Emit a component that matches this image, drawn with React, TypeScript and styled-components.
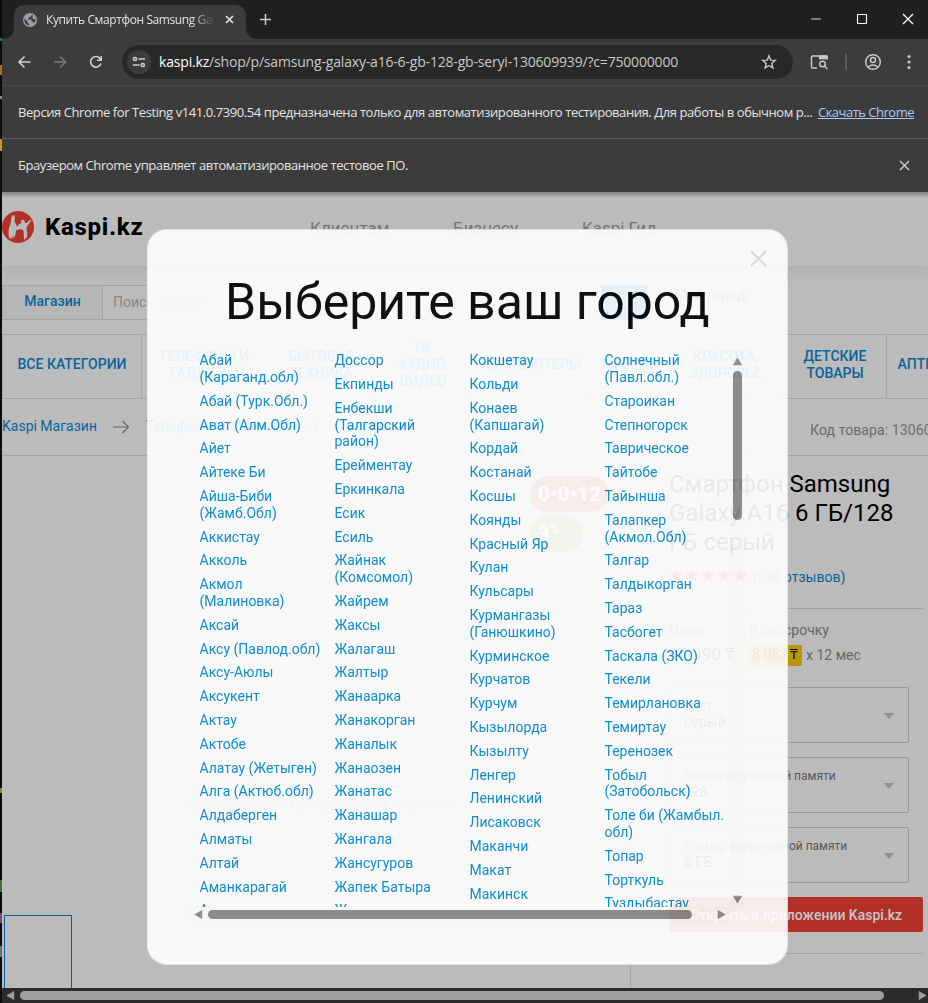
import React from 'react';
import styled, { createGlobalStyle, css } from 'styled-components';

const Global = createGlobalStyle`
  * { box-sizing: border-box; }
  html, body { margin: 0; padding: 0; background: #111; overflow: hidden; }
  svg { display: block; flex: none; }
`;

const Desktop = styled.div`
  width: 928px;
  height: 1003px;
  display: flex;
  overflow: hidden;
  background: #0c0c0c;
`;

const DesktopEdge = styled.div`
  width: 2px;
  flex: none;
  background: linear-gradient(
    #0c0c0c 0 38px, #1f6f73 38px 41px, #0c0c0c 41px 65px, #9c7417 65px 75px, #0c0c0c 75px 96px, #8a8a8a 96px 99px,
    #0c0c0c 99px 139px, #c29a13 139px 151px, #0c0c0c 151px 788px, #6f8f4e 788px 793px, #0c0c0c 793px 880px,
    #3f6f43 880px 892px, #0c0c0c 892px 913px, #7a4f70 913px 923px, #0c0c0c 923px 946px, #6b7078 946px 957px, #0c0c0c 957px
  );
`;

const Window = styled.div`
  flex: 1;
  min-width: 0;
  display: flex;
  flex-direction: column;
  overflow: hidden;
`;

const uiFont = css`
  font-family: 'Open Sans', 'Noto Sans', sans-serif;
`;

const TabStrip = styled.div`
  height: 39px;
  flex: none;
  display: flex;
  background: #1f2120;
  padding-left: 12px;
`;

const Tab = styled.div`
  ${uiFont}
  position: relative;
  width: 232px;
  height: 34px;
  margin-top: 5px;
  padding: 0 10px 5px 9px;
  border-radius: 10px 10px 0 0;
  background: #3c3c3c;
  display: flex;
  align-items: center;
  color: #e3e3e3;
  font-size: 12px;
  &::before,
  &::after {
    content: '';
    position: absolute;
    bottom: 0;
    width: 10px;
    height: 10px;
  }
  &::before {
    left: -10px;
    background: radial-gradient(circle at 0 0, transparent 9.5px, #3c3c3c 10px);
  }
  &::after {
    right: -10px;
    background: radial-gradient(circle at 100% 0, transparent 9.5px, #3c3c3c 10px);
  }
`;

const TabTitle = styled.div`
  width: 168px;
  margin-left: 9px;
  letter-spacing: -0.4px;
  white-space: nowrap;
  overflow: hidden;
  mask-image: linear-gradient(90deg, #000 145px, transparent 169px);
`;

const TabClose = styled.div`
  margin-left: 11px;
`;

const NewTab = styled.div`
  margin: 14px 0 0 14px;
`;

const WindowButtons = styled.div`
  display: flex;
  gap: 34px;
  margin: 13px 14px 0 auto;
`;

const Toolbar = styled.div`
  height: 47px;
  flex: none;
  display: flex;
  align-items: center;
  background: #3c3c3c;
  border-bottom: 1px solid #484848;
  padding: 0 17px 0 14px;
`;

const NavIcons = styled.div`
  display: flex;
  gap: 20px;
`;

const AddressBar = styled.div`
  ${uiFont}
  height: 34px;
  width: 671px;
  margin-left: 18px;
  border-radius: 17px;
  background: #282828;
  display: flex;
  align-items: center;
  padding: 0 16px 0 5px;
  color: #c7c7c7;
  font-size: 14px;
`;

const SiteButton = styled.div`
  width: 24px;
  height: 24px;
  border-radius: 50%;
  background: #3c3c3c;
  display: grid;
  place-items: center;
`;

const Url = styled.div`
  flex: 1;
  margin-left: 8px;
  padding-bottom: 2px;
  letter-spacing: -0.18px;
  white-space: nowrap;
  b {
    font-weight: 400;
    color: #fff;
  }
`;

const ToolbarActions = styled.div`
  display: flex;
  align-items: center;
  margin-left: 17px;
`;

const MenuButton = styled.div`
  margin-left: auto;
`;

const Divider = styled.div`
  width: 2px;
  height: 16px;
  margin: 0 17px;
  background: #5a5a5a;
`;

const InfoBar = styled.div<{ $last?: boolean }>`
  ${uiFont}
  height: 53px;
  flex: none;
  display: flex;
  align-items: center;
  padding: 0 14px ${(p) => (p.$last ? 1 : 0)}px 16px;
  background: #3c3c3c;
  border-bottom: ${(p) => (p.$last ? '0' : '1px solid #5c5c5c')};
  color: #e3e3e3;
  font-size: 13px;
`;

const InfoText = styled.span<{ $spacing: number }>`
  letter-spacing: ${(p) => p.$spacing}px;
  white-space: nowrap;
`;

const InfoLink = styled.span`
  margin-left: auto;
  color: #a8c7fa;
  text-decoration: underline;
  letter-spacing: -0.5px;
`;

const InfoClose = styled.div`
  margin: 0 4px 0 auto;
`;

const Page = styled.div`
  position: relative;
  flex: 1;
  min-height: 0;
  overflow: hidden;
  background: #bbb;
  font-family: Roboto, sans-serif;
  &::before {
    content: '';
    position: absolute;
    z-index: 1;
    inset: 0 0 auto 0;
    height: 6px;
    background: linear-gradient(rgba(0, 0, 0, 0.3), transparent);
  }
`;

const Header = styled.header`
  height: 74px;
  display: flex;
  box-shadow: 0 6px 14px rgba(0, 0, 0, 0.08);
`;

const Logo = styled.div`
  width: 308px;
  display: flex;
  align-items: center;
  gap: 11px;
  padding-bottom: 4px;
  color: #000;
  font-size: 24px;
  font-weight: 800;
  letter-spacing: 0.72px;
`;

const HeaderLink = styled.span<{ $width: number }>`
  width: ${(p) => p.$width}px;
  padding-top: 26px;
  color: #747474;
  font-size: 17px;
  line-height: 20px;
`;

const SearchRow = styled.div`
  display: flex;
  height: 35px;
  margin-top: 19px;
`;

const ShopTab = styled.div`
  width: 101px;
  border: 1px solid #a4a4a4;
  background: #b6b6b6;
  color: #08659b;
  font-size: 14px;
  font-weight: 500;
  line-height: 31px;
  text-align: center;
`;

const SearchField = styled.div`
  width: 498px;
  border: 1px solid #a4a4a4;
  border-width: 1px 0;
  padding-left: 10px;
  color: #868686;
  font-size: 14px;
  line-height: 32px;
`;

const SearchButton = styled.div`
  width: 46px;
  background: #08659b;
  border-radius: 0 2px 2px 0;
  display: grid;
  place-items: center;
`;

const CityLabel = styled.div`
  margin-left: 28px;
  color: #444;
  font-size: 14px;
  letter-spacing: 0.1px;
  line-height: 21px;
`;

const Categories = styled.nav`
  display: flex;
  width: 1000px;
  height: 65px;
  margin-top: 14px;
  border: 1px solid #a4a4a4;
`;

const Category = styled.div<{ $width: number }>`
  width: ${(p) => p.$width}px;
  flex: none;
  display: flex;
  align-items: center;
  justify-content: center;
  border-right: 1px solid #a4a4a4;
  padding-bottom: 4px;
  color: #08659b;
  font-size: 14px;
  font-weight: 500;
  line-height: 17px;
  text-align: center;
  white-space: pre;
`;

const Crumbs = styled.div`
  display: flex;
  gap: 16px;
  width: 1000px;
  height: 57px;
  border-bottom: 1px solid #a4a4a4;
  padding-top: 18px;
  color: #08659b;
  font-size: 14px;
  line-height: 18px;
  white-space: nowrap;
  svg { margin-top: 3px; }
`;

const ProductCode = styled.div`
  margin: 4px 0 0 auto;
  width: 192px;
  color: #6b6b6b;
  letter-spacing: 0.1px;
`;

const Product = styled.main`
  display: flex;
  height: 533px;
`;

const Gallery = styled.section`
  width: 629px;
  flex: none;
  display: flex;
  flex-direction: column;
  border-right: 1px solid #a4a4a4;
`;

const Badges = styled.div`
  display: flex;
  flex-direction: column;
  gap: 4px;
  margin: 20px 0 0 528px;
  color: #dcdcdc;
  font-weight: 900;
  font-size: 20px;
  letter-spacing: 0.4px;
`;

const Badge = styled.div<{ $width: number; $color: string }>`
  width: ${(p) => p.$width}px;
  height: 36px;
  border-radius: 18px;
  padding-left: 8px;
  background: ${(p) => p.$color};
  line-height: 36px;
  white-space: nowrap;
  sup {
    font-size: 12px;
    line-height: 0;
  }
`;

const ZoomHint = styled.div`
  margin: 243px 0 0 185px;
  color: #888;
  font-size: 14px;
  letter-spacing: 0.1px;
  line-height: 18px;
`;

const Thumb = styled.div`
  width: 68px;
  height: 80px;
  margin: 102px 0 0 2px;
  border: 1px solid #08659b;
`;

const Offer = styled.section`
  width: 254px;
  margin-left: 38px;
  display: flex;
  flex-direction: column;
`;

const ProductTitle = styled.h1`
  margin: 14px 0 0;
  font-size: 24px;
  font-weight: 400;
  line-height: 29px;
  color: #000;
  white-space: pre;
`;

const Rating = styled.div`
  display: flex;
  gap: 4px;
  height: 52px;
  padding-top: 11px;
  border-bottom: 1px solid #a0a0a0;
  color: #08659b;
  font-size: 14px;
  line-height: 18px;
`;

const Stars = styled.div`
  display: flex;
  gap: 1px;
`;

const Prices = styled.div`
  display: flex;
  height: 78px;
  padding-top: 12px;
  color: #666;
  font-size: 14px;
  line-height: 18px;
  white-space: nowrap;
`;

const Price = styled.div`
  width: 72px;
  height: 40px;
  border-right: 1px solid #a4a4a4;
`;

const Amount = styled.div`
  margin-top: 6px;
  color: #222;
  font-size: 17px;
`;

const Installment = styled.div`
  margin-left: 8px;
`;

const Monthly = styled.div`
  display: flex;
  align-items: center;
  gap: 4px;
  margin: 6px 0 0 -1px;
  line-height: 17px;
`;

const Highlight = styled.span`
  width: 54px;
  height: 21px;
  padding-left: 4px;
  background: #ba9800;
  color: #000;
  line-height: 19px;
`;

const Select = styled.div`
  width: 240px;
  height: 56px;
  margin-bottom: 14px;
  border: 1px solid #999;
  border-radius: 2px;
  display: flex;
  justify-content: space-between;
  align-items: center;
  padding: 0 14px;
  color: #222;
  font-size: 14px;
  line-height: 16px;
  svg { margin-top: 2px; }
`;

const SelectText = styled.div`
  padding-bottom: 2px;
`;

const SelectLabel = styled.div`
  font-size: 12px;
  line-height: 16px;
  color: #585858;
`;

const AppButton = styled.div`
  width: 254px;
  height: 35px;
  border-radius: 2px;
  background: #b13027;
  color: #c6c6c6;
  font-size: 14px;
  font-weight: 500;
  line-height: 36px;
  text-align: center;
`;

const Rule = styled.div`
  height: 1px;
  margin-top: 21px;
  background: #a2a2a2;
`;

const Modal = styled.div`
  position: absolute;
  z-index: 2;
  left: 145px;
  top: 37px;
  width: 641px;
  height: 736px;
  padding-left: 42px;
  border: 1px solid #e6e6e6;
  border-left-color: #f0f0f0;
  border-radius: 20px;
  background: #fff;
  opacity: 0.91;
  overflow: hidden;
`;

const ModalTop = styled.div`
  display: flex;
  justify-content: flex-end;
  height: 38px;
  padding: 20px 20px 0 0;
`;

const ModalTitle = styled.h2`
  margin: 0 0 0 35px;
  color: #000;
  font-size: 50px;
  font-weight: 400;
  line-height: 68px;
  white-space: nowrap;
`;

const Scroller = styled.div`
  display: grid;
  grid-template-columns: 540px 15px;
  grid-template-rows: 555px 15px;
  margin-top: 16px;
`;

const Columns = styled.div`
  display: flex;
  overflow: hidden;
  padding: 0.2px 0 0 9.5px;
`;

const Column = styled.ul`
  width: 135px;
  flex: none;
  margin: 0;
  padding: 0;
  list-style: none;
`;

const City = styled.li`
  margin-bottom: 7px;
  color: #0089d0;
  font-size: 14px;
  line-height: 16.8px;
  white-space: pre;
`;

const TrackV = styled.div`
  display: flex;
  flex-direction: column;
  align-items: center;
  padding-top: 5px;
  background: #fcfcfc;
`;

const TrackH = styled.div`
  display: flex;
  align-items: center;
  padding: 0 4px;
  background: #fcfcfc;
`;

const ScrollThumb = styled.div<{ $w: number; $h: number; $m: string; $c: string }>`
  width: ${(p) => p.$w}px;
  height: ${(p) => p.$h}px;
  margin: ${(p) => p.$m};
  flex: none;
  border-radius: 5px;
  background: ${(p) => p.$c};
`;

const PageScroll = styled.div`
  height: 15px;
  flex: none;
  display: flex;
  align-items: center;
  padding: 0 1px 0 4px;
  background: #2b2b2b;
`;

const Triangle = ({ dir, color = '#888', size = 8 }: { dir: 'up' | 'down' | 'left' | 'right'; color?: string; size?: number }) => {
  const turn = { up: 0, right: 90, down: 180, left: 270 }[dir];
  return (
    <svg width={size} height={size} viewBox="0 0 8 8">
      <path d="M4 .8 7.6 7H.4Z" fill={color} stroke={color} strokeWidth=".6" strokeLinejoin="round" transform={`rotate(${turn} 4 4)`} />
    </svg>
  );
};

const Cross = ({ size, color, width }: { size: number; color: string; width: number }) => (
  <svg width={size} height={size} viewBox={`0 0 ${size} ${size}`}>
    <path d={`M1 1 ${size - 1} ${size - 1}M${size - 1} 1 1 ${size - 1}`} stroke={color} strokeWidth={width} />
  </svg>
);

const CrumbArrow = () => (
  <svg width="17" height="14" viewBox="0 0 17 14" fill="none" stroke="#666" strokeWidth="1.2">
    <path d="M0 7h15.5M9.5 1l6 6-6 6" />
  </svg>
);

const Star = () => (
  <svg width="15" height="15" viewBox="0 0 13 13">
    <path d="M6.5 0 8 4.7h5L9 7.7l1.5 4.9-4-3-4 3L4 7.7 0 4.7h5Z" fill="#b13027" />
  </svg>
);

const cities: string[][] = [
  ['Абай\n(Караганд.обл)', 'Абай (Турк.Обл.)', 'Ават (Алм.Обл)', 'Айет', 'Айтеке Би', 'Айша-Биби\n(Жамб.Обл)', 'Аккистау', 'Акколь', 'Акмол\n(Малиновка)', 'Аксай', 'Аксу (Павлод.обл)', 'Аксу-Аюлы', 'Аксукент', 'Актау', 'Актобе', 'Алатау (Жетыген)', 'Алга (Актюб.обл)', 'Алдаберген', 'Алматы', 'Алтай', 'Аманкарагай', 'Амангельды'],
  ['Доссор', 'Екпинды', 'Енбекши\n(Талгарский\nрайон)', 'Ерейментау', 'Еркинкала', 'Есик', 'Есиль', 'Жайнак\n(Комсомол)', 'Жайрем', 'Жаксы', 'Жалагаш', 'Жалтыр', 'Жанаарка', 'Жанакорган', 'Жаналык', 'Жанаозен', 'Жанатас', 'Жанашар', 'Жангала', 'Жансугуров', 'Жапек Батыра', 'Жаркент'],
  ['Кокшетау', 'Кольди', 'Конаев\n(Капшагай)', 'Кордай', 'Костанай', 'Косшы', 'Коянды', 'Красный Яр', 'Кулан', 'Кульсары', 'Курмангазы\n(Ганюшкино)', 'Курминское', 'Курчатов', 'Курчум', 'Кызылорда', 'Кызылту', 'Ленгер', 'Ленинский', 'Лисаковск', 'Маканчи', 'Макат', 'Макинск'],
  ['Солнечный\n(Павл.обл.)', 'Староикан', 'Степногорск', 'Таврическое', 'Тайтобе', 'Тайынша', 'Талапкер\n(Акмол.Обл)', 'Талгар', 'Талдыкорган', 'Тараз', 'Тасбогет', 'Таскала (ЗКО)', 'Текели', 'Темирлановка', 'Темиртау', 'Теренозек', 'Тобыл\n(Затобольск)', 'Толе би (Жамбыл.\nобл)', 'Топар', 'Торткуль', 'Туздыбастау'],
];

const categories: [string, number][] = [
  ['ВСЕ КАТЕГОРИИ', 139],
  ['ТЕЛЕФОНЫ И\nГАДЖЕТЫ', 125],
  ['БЫТОВАЯ\nТЕХНИКА', 109],
  ['ТВ,\nАУДИО,\nВИДЕО', 95],
  ['КОМПЬЮТЕРЫ', 121],
  ['МЕБЕЛЬ', 76],
  ['КРАСОТА,\nЗДОРОВЬЕ', 116],
  ['ДЕТСКИЕ\nТОВАРЫ', 103],
  ['АПТЕКА', 76],
];

const options = [
  ['Цвет', 'серый'],
  ['Объем встроенной памяти', '128'],
  ['Размер оперативной памяти', '6 ГБ'],
];

export default function App() {
  return (
    <Desktop>
      <Global />
      <DesktopEdge />
      <Window>
        <TabStrip>
          <Tab>
            <svg width="14" height="14" viewBox="0 0 14 14">
              <circle cx="7" cy="7" r="7" fill="#9aa0a6" />
              <path d="M1.4 5.5 4.5 8.6v1.1l1.6 1.2v1.5C3.4 12.2 1.4 9.8 1.3 7ZM8.7 1.6v.9L7.3 3.9H5.9v1.4H4.7v1.3h3.7v2h1.3l1 1.7c1.2-1.2 1.7-2.7 1.6-4.4L10.5 6.2 9.2 4.6l1-1.5Z" fill="#3c3c3c" />
            </svg>
            <TabTitle>Купить Смартфон Samsung Galaxy</TabTitle>
            <TabClose><Cross size={9} color="#e3e3e3" width={1.6} /></TabClose>
          </Tab>
          <NewTab>
            <svg width="11" height="11" viewBox="0 0 11 11" stroke="#c7c7c7" strokeWidth="1.6"><path d="M5.5 0v11M0 5.5h11" /></svg>
          </NewTab>
          <WindowButtons>
            <svg width="12" height="12" viewBox="0 0 12 12"><path d="M1 6h10" stroke="#999" strokeWidth="1.5" /></svg>
            <svg width="12" height="12" viewBox="0 0 12 12"><rect x="1.5" y="1.5" width="9" height="9" rx=".6" fill="none" stroke="#fff" strokeWidth="1.1" /></svg>
            <Cross size={12} color="#fff" width={1.3} />
          </WindowButtons>
        </TabStrip>
        <Toolbar>
          <NavIcons>
            <svg width="16" height="16" viewBox="0 0 16 16" fill="none" stroke="#d0d0d0" strokeWidth="1.6"><path d="M14.500 8H4M8.500 2.500 3 8 8.500 13.500" /></svg>
            <svg width="16" height="16" viewBox="0 0 16 16" fill="none" stroke="#777" strokeWidth="1.6"><path d="M2 8h11M8 2.500 13.500 8 8 13.500" /></svg>
            <svg width="16" height="16" viewBox="0 0 16 16" fill="none" stroke="#d0d0d0" strokeWidth="1.6"><path d="M13 9.500A5.300 5.300 0 1 1 12.500 5M13.200 2v4.300H9" /></svg>
          </NavIcons>
          <AddressBar>
            <SiteButton>
              <svg width="14" height="14" viewBox="0 0 14 14" fill="none" stroke="#d0d0d0" strokeWidth="1.5">
                <circle cx="3" cy="4" r="1.6" /><path d="M6.500 4H13M1 10h6.500" /><circle cx="10.800" cy="10" r="1.600" />
              </svg>
            </SiteButton>
            <Url><b>kaspi.kz</b>/shop/p/samsung-galaxy-a16-6-gb-128-gb-seryi-130609939/?c=750000000</Url>
            <svg width="16" height="16" viewBox="0 0 16 16" fill="none" stroke="#c7c7c7" strokeWidth="1.4"><path d="m8 1.800 1.700 4.300 4.600.3-3.500 3 1.100 4.500L8 11.500l-3.900 2.400 1.100-4.500-3.500-3 4.600-.3Z" /></svg>
          </AddressBar>
          <ToolbarActions>
            <svg width="18" height="16" viewBox="0 0 18 16" fill="none" stroke="#c7c7c7" strokeWidth="1.5">
              <path d="M7 14H2.500q-1 0-1-1V3q0-1 1-1H17M17 5.500V2" /><path d="M9 1.300h8.500v4H9Z" fill="#c7c7c7" stroke="none" /><circle cx="12.500" cy="10" r="2.800" /><path d="m14.500 12 3 3" />
            </svg>
            <Divider />
            <svg width="18" height="18" viewBox="0 0 18 18" fill="none" stroke="#c7c7c7" strokeWidth="1.5"><circle cx="9" cy="9" r="7.300" /><circle cx="9" cy="7" r="2.500" /><path d="M4 14q5-4 10 0" /></svg>
          </ToolbarActions>
          <MenuButton>
            <svg width="4" height="16" viewBox="0 0 4 16" fill="#c7c7c7"><circle cx="2" cy="2.500" r="1.600" /><circle cx="2" cy="8" r="1.600" /><circle cx="2" cy="13.500" r="1.600" /></svg>
          </MenuButton>
        </Toolbar>
        <InfoBar>
          <InfoText $spacing={-0.42}>Версия Chrome for Testing v141.0.7390.54 предназначена только для автоматизированного тестирования. Для работы в обычном р...</InfoText>
          <InfoLink>Скачать Chrome</InfoLink>
        </InfoBar>
        <InfoBar $last>
          <InfoText $spacing={-0.43}>Браузером Chrome управляет автоматизированное тестовое ПО.</InfoText>
          <InfoClose><Cross size={11} color="#d0d0d0" width={1.4} /></InfoClose>
        </InfoBar>

        <Page>
          <Header>
            <Logo>
              <svg width="32" height="32" viewBox="0 0 32 32">
                <circle cx="16" cy="16" r="16" fill="#b13027" />
                <path d="M7 26.500C6 21 6.500 16.500 8.500 13L9.500 6q1-2.500 3-1.500l.5 3L12.500 11q2 1.500 2.500 5l2-3 2.500-1-.5-2q1.500-2 3.500-.5l.5 2.500h1.500l4-3.500.8.800L26 14q-1.500 1.500-1.500 4 1.500 4 .5 8l-3 3-.5-9.500q-3-2.500-7.500 0L13.500 23l-1 4-.5-3-1 4-1-3-1 3Z" fill="#bbb" />
              </svg>
              Kaspi.kz
            </Logo>
            <HeaderLink $width={143}>Клиентам</HeaderLink>
            <HeaderLink $width={129}>Бизнесу</HeaderLink>
            <HeaderLink $width={100}>Kaspi Гид</HeaderLink>
          </Header>
          <SearchRow>
            <ShopTab>Магазин</ShopTab>
            <SearchField>Поиск товара</SearchField>
            <SearchButton>
              <svg width="18" height="18" viewBox="0 0 18 18" fill="none" stroke="#bbb" strokeWidth="2"><circle cx="7" cy="7" r="5.500" /><path d="m11 11 6 6" /></svg>
            </SearchButton>
            <CityLabel>Мой город:</CityLabel>
          </SearchRow>
          <Categories>
            {categories.map(([name, width]) => (
              <Category key={name} $width={width}>{name}</Category>
            ))}
          </Categories>
          <Crumbs>
            <span>Kaspi Магазин</span>
            <CrumbArrow />
            <span>Телефоны и гаджеты</span>
            <CrumbArrow />
            <span>Смартфоны</span>
            <ProductCode>Код товара: 130609939</ProductCode>
          </Crumbs>
          <Product>
            <Gallery>
              <Badges>
                <Badge $width={79} $color="#b13027">0•0•12</Badge>
                <Badge $width={53} $color="#5d8f32">3<sup>%</sup></Badge>
              </Badges>
              <ZoomHint>Чтобы увеличить, нажмите на картинку</ZoomHint>
              <Thumb />
            </Gallery>
            <Offer>
              <ProductTitle>{'Смартфон Samsung\nGalaxy A16 6 ГБ/128\nГБ серый'}</ProductTitle>
              <Rating>
                <Stars>{[0, 1, 2, 3, 4].map((i) => <Star key={i} />)}</Stars>
                <span>(936 отзывов)</span>
              </Rating>
              <Prices>
                <Price>Цена<Amount>96 990 ₸</Amount></Price>
                <Installment>
                  В рассрочку
                  <Monthly><Highlight>8 083 ₸</Highlight>x 12 мес</Monthly>
                </Installment>
              </Prices>
              {options.map(([label, value]) => (
                <Select key={label}>
                  <SelectText><SelectLabel>{label}</SelectLabel>{value}</SelectText>
                  <svg width="10" height="6" viewBox="0 0 10 6"><path d="M0 0h10L5 6Z" fill="#909090" /></svg>
                </Select>
              ))}
              <AppButton>Открыть в приложении Kaspi.kz</AppButton>
              <Rule />
            </Offer>
          </Product>

          <Modal>
            <ModalTop><Cross size={17} color="#ddd" width={2} /></ModalTop>
            <ModalTitle>Выберите ваш город</ModalTitle>
            <Scroller>
              <Columns>
                {cities.map((list) => (
                  <Column key={list[0]}>{list.map((c) => <City key={c}>{c}</City>)}</Column>
                ))}
              </Columns>
              <TrackV>
                <Triangle dir="up" size={9} />
                <ScrollThumb $w={9} $h={149} $m="5px 0 375px" $c="#888" />
                <Triangle dir="down" size={9} />
              </TrackV>
              <TrackH>
                <Triangle dir="left" size={9} />
                <ScrollThumb $w={484} $h={9} $m="0 auto 0 5px" $c="#888" />
                <Triangle dir="right" size={9} />
              </TrackH>
            </Scroller>
          </Modal>
        </Page>
        <PageScroll>
          <Triangle dir="left" color="#9f9f9f" size={9} />
          <ScrollThumb $w={864} $h={9} $m="0 auto 0 5px" $c="#9f9f9f" />
          <Triangle dir="right" color="#9f9f9f" size={9} />
        </PageScroll>
      </Window>
    </Desktop>
  );
}
